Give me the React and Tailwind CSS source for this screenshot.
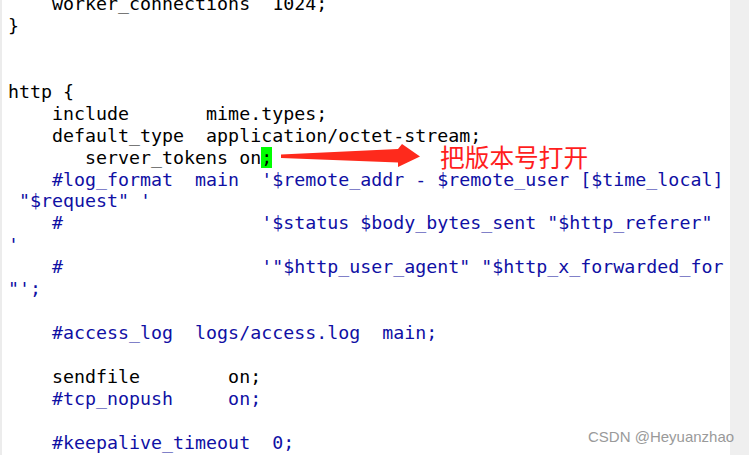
import React from 'react';

// lines of the nginx.conf shown in the editor; c = comment (blue)
const lines = [
  { t: '    worker_connections  1024;' },
  { t: '}' },
  { t: '' },
  { t: '' },
  { t: 'http {' },
  { t: '    include       mime.types;' },
  { t: '    default_type  application/octet-stream;' },
  { t: 'tokens' },
  { t: "    #log_format  main  '$remote_addr - $remote_user [$time_local]", c: true },
  { t: ' "$request" \'', c: true },
  { t: '    #                  \'$status $body_bytes_sent "$http_referer"', c: true },
  { t: "'", c: true },
  { t: '    #                  \'"$http_user_agent" "$http_x_forwarded_for', c: true },
  { t: '"\';', c: true },
  { t: '' },
  { t: '    #access_log  logs/access.log  main;', c: true },
  { t: '' },
  { t: '    sendfile        on;' },
  { t: '    #tcp_nopush     on;', c: true },
  { t: '' },
  { t: '    #keepalive_timeout  0;', c: true },
];

function App() {
  return (
    <div className="relative w-[749px] h-[455px] overflow-hidden bg-white flex">
      <div className="w-[2px] shrink-0 bg-[#ececec]" />
      <div
        className="flex-1 min-w-0 overflow-hidden pl-[6px] -mt-[7px] text-[18.3px] leading-[21.95px] whitespace-pre"
        style={{ fontFamily: '"DejaVu Sans Mono", monospace' }}
      >
        {lines.map((line, i) =>
          line.t === 'tokens' ? (
            <div key={i} className="h-[21.95px] text-black">
              {'       server_tokens on'}
              <span className="bg-[#00ff00]">;</span>
            </div>
          ) : (
            <div key={i} className={`h-[21.95px] ${line.c ? 'text-[#1010a4]' : 'text-black'}`}>
              {line.t}
            </div>
          )
        )}
      </div>
      <div className="w-[19px] shrink-0 bg-[#efefef]" />

      {/* annotation arrow */}
      <svg className="absolute left-0 top-0" width="749" height="455">
        <polygon
          points="281,154.5 398,149 402,144 420,156.5 398,167 398,162.5 281,158"
          fill="#fe2a1c"
        />
      </svg>
      <div
        className="absolute left-[440px] top-[141px] text-[24.7px] leading-[30px] text-[#ff1e1e]"
        style={{ fontFamily: '"Noto Sans CJK SC", sans-serif' }}
      >
        把版本号打开
      </div>

      {/* watermark */}
      <div
        className="absolute left-[588px] top-[427px] text-[15px] leading-[20px] text-[#9a9a9a]"
        style={{ fontFamily: '"Liberation Sans", Arial, sans-serif' }}
      >
        CSDN @Heyuanzhao
      </div>
    </div>
  );
}

export default App;
